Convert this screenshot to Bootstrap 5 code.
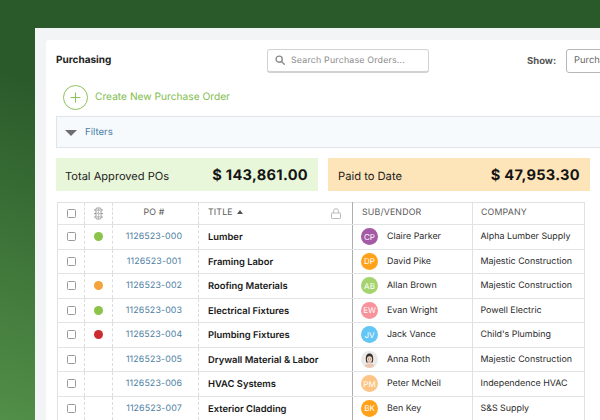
<!DOCTYPE html>
<html lang="en">
<head>
<meta charset="utf-8">
<title>Purchasing</title>
<link href="https://cdn.jsdelivr.net/npm/bootstrap@5.3.0/dist/css/bootstrap.min.css" rel="stylesheet">
<style>
html,body{height:420px;overflow:hidden}
body{width:600px;font-family:Inter,"Liberation Sans",sans-serif;color:#1c1c1c;background:linear-gradient(200deg,#2a5a2a 0%,#2a5a2a 45%,#528f48 100%);padding:28px 0 0 35px;text-rendering:geometricPrecision}
.shell{width:565px;height:392px;background:#f3f4f6;padding:12px 0 0 11px;overflow:hidden}
.sheet{width:554px;height:380px;background:#fff;border-radius:3px 0 0 0;padding:9px 0 0 10px;overflow:hidden}
.topbar{height:23px;width:600px}
.page-name{font-size:10px;font-weight:700;width:211px;color:#222;padding-bottom:1px}
.search-box{width:162px;height:24px;border:1px solid #d0d3d6;border-bottom-width:2px;border-radius:3px;padding-left:7px;font-size:8.8px;color:#8a8a8a;letter-spacing:.2px;gap:6px}
.search-box span{padding-top:2px}
.show-label{font-size:9.5px;font-weight:700;color:#555;margin-left:98px;width:39px;padding-top:3px}
.show-select{width:70px;height:24px;border:1px solid #b5b7ba;border-radius:3px;padding:1px 0 0 7px;font-size:9.4px;color:#666;overflow:hidden}
.create-row{height:44px;padding:7px 0 0 7px;color:#82bd50;font-size:10.2px;gap:7px}
.filter-bar{width:560px;height:32px;background:#f6fafd;border:1px solid #e0e4e8;border-right:0;padding:1px 0 0 8px;font-size:9.6px;color:#4a7ea5}
.filter-name{padding-top:2px}
.tri{width:0;height:0;border-left:6px solid transparent;border-right:6px solid transparent;border-top:6px solid #6e6e6e}
.stat-row{margin-top:10px;width:534px}
.stat{width:262px;height:33px;padding:3px 10px 0 9px;font-size:11.1px}
.stat b{font-size:14.6px;letter-spacing:.3px;color:#141414}
.stat-green{background:#e8f6d9}
.stat-orange{background:#fee4b9;padding-left:10px;font-size:11.2px}
.po-grid{margin:11px 0 0 1px;width:527px;table-layout:fixed;border-collapse:collapse;font-size:8.9px;white-space:nowrap}
.po-grid th,.po-grid td{height:24.5px;padding:0;vertical-align:middle;border-bottom:1px solid #e2e3e5;line-height:1;overflow:hidden}
.po-grid thead th{height:22px;font-weight:400;font-size:8.8px;color:#5a5a5a;letter-spacing:.15px;border-top:1px solid #e0e1e3}
.po-grid tr>*:first-child{border-left:1px solid #e0e1e3}
.po-grid .dash{border-right:1px dashed #dcdcdc}
.po-grid .solid{border-right:1px solid #e0e1e3}
.po-grid .pin{border-right:1px solid #aeaeae}
.tick{display:block;margin:auto;width:9px;height:9px;border:1px solid #9a9a9a;border-radius:1.5px;background:#fff}
.dot{display:block;margin:auto;width:9px;height:9px;border-radius:50%}
.dot-g{background:#8cc34a}.dot-o{background:#f3a339}.dot-r{background:#cc2b2f}
.po-grid .po-head{padding-right:3px}
.po-grid .po-link{color:#4f7fa3;letter-spacing:.1px;padding:2px 3px 0 0}
.po-grid .ttl{font-weight:600;padding:2px 0 0 9px;color:#171717;font-size:9.4px}
.po-grid .pad{padding-left:9px}
.po-grid .pad-co{padding-left:8px}
.lock-side{padding-right:11px}
.face{width:17px;height:17px;border-radius:50%;color:#fff;font-size:8px;margin:0 9px 0 8px;flex:none;overflow:hidden}
.person{color:#2a2a2a}
.who{padding-top:2px}
.po-grid .co{padding:2px 0 0 7.500px;color:#2a2a2a}
.up{display:inline-block;border-left:3.5px solid transparent;border-right:3.5px solid transparent;border-bottom:4px solid #555;margin:0 0 1px 4px}
</style>
</head>
<body>
<div class="shell">
<div class="sheet">
  <div class="topbar d-flex align-items-center">
    <div class="page-name">Purchasing</div>
    <div class="search-box d-flex align-items-center">
      <svg width="10" height="10" viewBox="0 0 11 11" fill="none" stroke="#8a8a8a" stroke-width="1.5"><circle cx="4.6" cy="4.6" r="3.4"/><path d="M7.2 7.2l3 3" stroke-linecap="round"/></svg>
      <span>Search Purchase Orders...</span>
    </div>
    <div class="show-label">Show:</div>
    <div class="show-select d-flex align-items-center">Purchase</div>
  </div>
  <div class="create-row d-flex align-items-center">
    <svg width="25" height="25" viewBox="0 0 25 25" fill="none" stroke="#8ec05c" stroke-width="1"><circle cx="12.5" cy="12.5" r="12"/><path d="M12.5 7.5v10M7.5 12.5h10" stroke-width="1.1"/></svg>
    <span>Create New Purchase Order</span>
  </div>
  <div class="filter-bar d-flex align-items-center gap-2"><span class="tri"></span><span class="filter-name">Filters</span></div>
  <div class="stat-row d-flex justify-content-between">
    <div class="stat stat-green d-flex align-items-center justify-content-between"><span>Total Approved POs</span><b>$ 143,861.00</b></div>
    <div class="stat stat-orange d-flex align-items-center justify-content-between"><span>Paid to Date</span><b>$ 47,953.30</b></div>
  </div>
  <table class="po-grid">
    <colgroup><col style="width:27px"><col style="width:28px"><col style="width:86px"><col style="width:154px"><col style="width:120px"><col style="width:112px"></colgroup>
    <thead><tr>
      <th class="dash"><span class="tick"></span></th>
      <th class="dash"><svg class="d-block mx-auto" width="9" height="13" viewBox="0 0 9 13" fill="none" stroke="#9a9a9a"><rect x="2" y="1" width="5" height="11" rx="1"/><circle cx="4.5" cy="3.2" r=".8"/><circle cx="4.5" cy="6.5" r=".8"/><circle cx="4.5" cy="9.8" r=".8"/><path d="M0 3h2M7 3h2M0 6.500h2M7 6.500h2M0 10h2M7 10h2"/></svg></th>
      <th class="dash text-center po-head">PO #</th>
      <th class="pin pad"><div class="d-flex align-items-center justify-content-between lock-side"><span>TITLE<span class="up"></span></span><svg width="10" height="11" viewBox="0 0 10 11" fill="none" stroke="#b9b9b9"><rect x=".5" y="5" width="9" height="5.500" rx=".6"/><path d="M2.500 5V3.200a2.500 2.500 0 0 1 5 0V5"/></svg></div></th>
      <th class="solid pad">SUB/VENDOR</th>
      <th class="solid pad-co">COMPANY</th>
    </tr></thead>
    <tbody>
      <tr><td class="dash"><span class="tick"></span></td><td class="dash"><span class="dot dot-g"></span></td><td class="dash text-center po-link">1126523-000</td><td class="pin ttl">Lumber</td><td class="solid"><div class="d-flex align-items-center person"><span class="face d-flex align-items-center justify-content-center" style="background:#a45aa4">CP</span><span class="who">Claire Parker</span></div></td><td class="solid co">Alpha Lumber Supply</td></tr>
      <tr><td class="dash"><span class="tick"></span></td><td class="dash"></td><td class="dash text-center po-link">1126523-001</td><td class="pin ttl">Framing Labor</td><td class="solid"><div class="d-flex align-items-center person"><span class="face d-flex align-items-center justify-content-center" style="background:#ffa21a">DP</span><span class="who">David Pike</span></div></td><td class="solid co">Majestic Construction</td></tr>
      <tr><td class="dash"><span class="tick"></span></td><td class="dash"><span class="dot dot-o"></span></td><td class="dash text-center po-link">1126523-002</td><td class="pin ttl">Roofing Materials</td><td class="solid"><div class="d-flex align-items-center person"><span class="face d-flex align-items-center justify-content-center" style="background:#a5d46f">AB</span><span class="who">Allan Brown</span></div></td><td class="solid co">Majestic Construction</td></tr>
      <tr><td class="dash"><span class="tick"></span></td><td class="dash"><span class="dot dot-g"></span></td><td class="dash text-center po-link">1126523-003</td><td class="pin ttl">Electrical Fixtures</td><td class="solid"><div class="d-flex align-items-center person"><span class="face d-flex align-items-center justify-content-center" style="background:#f8929b">EW</span><span class="who">Evan Wright</span></div></td><td class="solid co">Powell Electric</td></tr>
      <tr><td class="dash"><span class="tick"></span></td><td class="dash"><span class="dot dot-r"></span></td><td class="dash text-center po-link">1126523-004</td><td class="pin ttl">Plumbing Fixtures</td><td class="solid"><div class="d-flex align-items-center person"><span class="face d-flex align-items-center justify-content-center" style="background:#63c6f5">JV</span><span class="who">Jack Vance</span></div></td><td class="solid co">Child's Plumbing</td></tr>
      <tr><td class="dash"><span class="tick"></span></td><td class="dash"></td><td class="dash text-center po-link">1126523-005</td><td class="pin ttl">Drywall Material &amp; Labor</td><td class="solid"><div class="d-flex align-items-center person"><span class="face" style="background:#eceae8"><svg class="d-block" width="17" height="17" viewBox="0 0 17 17"><path d="M3 17c.5-3.500 2.500-4.500 5.500-4.500s5 1 5.500 4.500z" fill="#e9c8b4"/><path d="M4.800 8c0-4 1.500-5.500 3.700-5.500S12.200 4 12.200 8c0 1.500-.3 3-.8 3.500H5.600C5.100 11 4.800 9.500 4.800 8z" fill="#33302e"/><ellipse cx="8.500" cy="8.300" rx="2.600" ry="3.600" fill="#f0d3c0"/><path d="M6 5.800c1-.9 3.800-1 5 .4-.8-2.300-4.500-2.600-5-.4z" fill="#33302e"/><path d="M7 8h.9M9.100 8h.9" stroke="#333" stroke-width=".6"/><path d="M7.700 10.300h1.600" stroke="#b8655f" stroke-width=".6"/></svg></span><span class="who">Anna Roth</span></div></td><td class="solid co">Majestic Construction</td></tr>
      <tr><td class="dash"><span class="tick"></span></td><td class="dash"></td><td class="dash text-center po-link">1126523-006</td><td class="pin ttl">HVAC Systems</td><td class="solid"><div class="d-flex align-items-center person"><span class="face d-flex align-items-center justify-content-center" style="background:#fcc485">PM</span><span class="who">Peter McNeil</span></div></td><td class="solid co">Independence HVAC</td></tr>
      <tr><td class="dash"><span class="tick"></span></td><td class="dash"></td><td class="dash text-center po-link">1126523-007</td><td class="pin ttl">Exterior Cladding</td><td class="solid"><div class="d-flex align-items-center person"><span class="face d-flex align-items-center justify-content-center" style="background:#ffa21a">BK</span><span class="who">Ben Key</span></div></td><td class="solid co">S&amp;S Supply</td></tr>
    </tbody>
  </table>
</div>
</div>
<script src="https://cdn.jsdelivr.net/npm/bootstrap@5.3.0/dist/js/bootstrap.bundle.min.js"></script>
</body>
</html>
